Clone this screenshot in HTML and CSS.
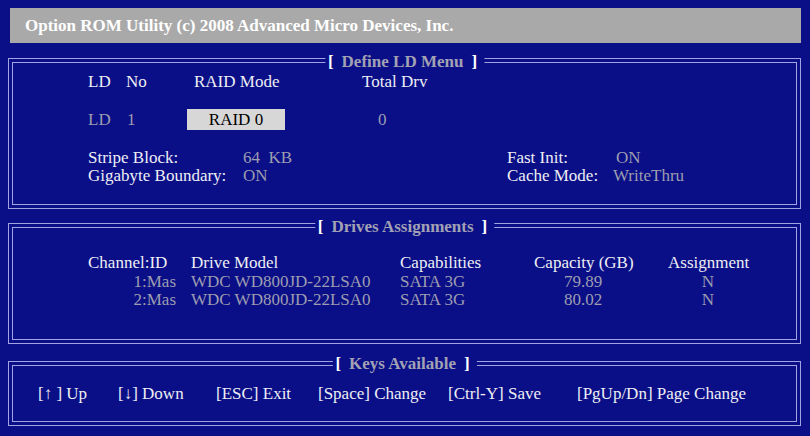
FILE: index.html
```html
<!DOCTYPE html>
<html>
<head>
<meta charset="utf-8">
<link rel="stylesheet" href="styles.css">
</head>
<body>
<div class="header">Option ROM Utility (c) 2008 Advanced Micro Devices, Inc.</div>

<section class="panel p1">
  <div class="title"><span class="br">[</span><span class="tt">Define LD Menu</span><span class="br">]</span></div>
  <div class="frame">
    <div class="row rowa">
      <span class="c-ld">LD</span><span class="c-no">No</span><span class="c-mode">RAID Mode</span><span>Total Drv</span>
    </div>
    <div class="row rowb">
      <span class="c-ld1 dim">LD</span><span class="c-no1 dim">1</span><span class="raidbox">RAID 0</span><span class="c-gap"></span><span class="dim">0</span>
    </div>
    <div class="grid-opts">
      <span>Stripe Block:</span><span class="dim v1">64&nbsp;&nbsp;KB</span><span>Fast Init:</span><span class="dim v2">ON</span>
      <span>Gigabyte Boundary:</span><span class="dim">ON</span><span>Cache Mode:</span><span class="dim">WriteThru</span>
    </div>
  </div>
</section>

<section class="panel p2">
  <div class="title"><span class="br">[</span><span class="tt">Drives Assignments</span><span class="br">]</span></div>
  <div class="frame">
    <div class="drives">
      <span class="d1 hd">Channel:ID</span><span class="d2">Drive Model</span><span class="d3">Capabilities</span><span class="d4">Capacity (GB)</span><span class="d5">Assignment</span>
      <span class="d1 dim">1:Mas</span><span class="d2 dim">WDC WD800JD-22LSA0</span><span class="d3 dim">SATA 3G</span><span class="d4 dim">79.89</span><span class="d5 dim">N</span>
      <span class="d1 dim">2:Mas</span><span class="d2 dim">WDC WD800JD-22LSA0</span><span class="d3 dim">SATA 3G</span><span class="d4 dim">80.02</span><span class="d5 dim">N</span>
    </div>
  </div>
</section>

<section class="panel p3">
  <div class="title"><span class="br">[</span><span class="tt">Keys Available</span><span class="br">]</span></div>
  <div class="frame">
    <div class="keys">
      <span>[↑ ] Up</span><span>[↓] Down</span><span>[ESC] Exit</span><span>[Space] Change</span><span>[Ctrl-Y] Save</span><span>[PgUp/Dn] Page Change</span>
    </div>
  </div>
</section>
</body>
</html>
```

FILE: styles.css
```css
html, body {
  margin: 0;
  padding: 0;
  background: #0a0f87;
}
body {
  width: 810px;
  height: 436px;
  overflow: hidden;
  font-family: "Liberation Serif", "Times New Roman", serif;
  font-size: 17px;
  color: #eeeef4;
  padding-top: 8px;
  box-sizing: border-box;
}
.header {
  margin-left: 10px;
  width: 791px;
  height: 35px;
  line-height: 35px;
  background: #a9a9a9;
  color: #ffffff;
  font-weight: bold;
  padding-left: 15px;
  box-sizing: border-box;
  white-space: nowrap;
}
.panel {
  position: relative;
  margin-left: 8px;
  width: 793px;
  border: 1px solid #a3a3e2;
  padding: 3px;
  box-sizing: border-box;
}
.frame {
  border: 1px solid #a3a3e2;
  box-sizing: border-box;
  height: 100%;
  padding-left: 75px;
  line-height: 18px;
}
.p1 { margin-top: 15px; height: 151px; }
.p2 { margin-top: 14px; height: 121px; }
.p3 { margin-top: 17px; height: 65px; }

.title {
  position: absolute;
  top: -5px;
  left: 50%;
  transform: translateX(-50%);
  background: #0a0f87;
  padding: 0 7px 0 3px;
  line-height: 15px;
  font-weight: bold;
  white-space: nowrap;
}
.p3 .title { top: -6px; }
.title .br { color: #ffffff; }
.title .tt { color: #a2a2b4; margin: 0 8px; }

.dim { color: #9d9db0; }

.row { display: flex; white-space: nowrap; }
.p1 .frame { padding-top: 10px; }
.rowa { height: 18px; }
.c-ld { width: 38px; }
.c-no { width: 68px; }
.c-mode { width: 168px; }
.rowb { margin-top: 18px; height: 21px; line-height: 21px; }
.c-ld1 { width: 39px; }
.c-no1 { width: 60px; }
.raidbox {
  width: 98px;
  background: #d7d7d7;
  color: #000000;
  text-align: center;
}
.c-gap { width: 93px; }
.grid-opts {
  margin-top: 19px;
  display: grid;
  grid-template-columns: 155px 264px 106px auto;
  white-space: nowrap;
}
.v2 { padding-left: 3px; }

.p2 .frame { padding-top: 26px; }
.drives {
  display: grid;
  grid-template-columns: 88px 224px 134px 98px 116px;
  grid-template-rows: 19px 18px 18px;
  white-space: nowrap;
}
.d1 { text-align: right; }
.d1.hd { text-align: left; }
.d2 { padding-left: 15px; }
.d4 { text-align: center; }
.d5 { padding-left: 36px; text-align: center; }

.p3 .frame { padding-top: 19px; padding-left: 25px; }
.keys {
  display: grid;
  grid-template-columns: 80px 98px 102px 130px 129px auto;
  white-space: nowrap;
}
```
